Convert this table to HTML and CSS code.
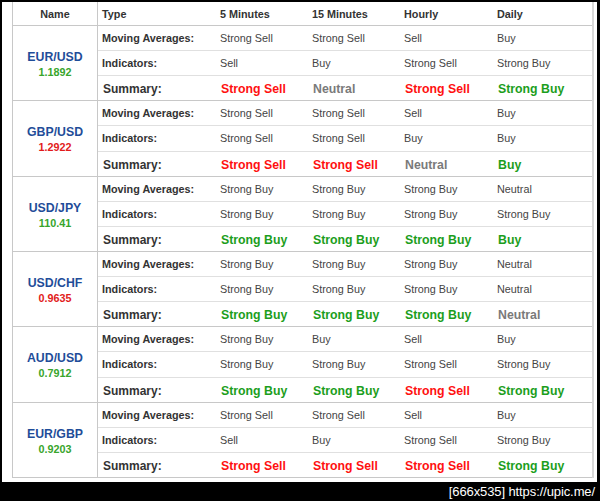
FILE: index.html
```html
<!DOCTYPE html>
<html>
<head>
<meta charset="utf-8">
<link rel="stylesheet" href="styles.css">
</head>
<body>
<div class="frame">
  <div class="grid">
    <div class="h name-h">Name</div>
    <div class="h">Type</div>
    <div class="h">5 Minutes</div>
    <div class="h">15 Minutes</div>
    <div class="h">Hourly</div>
    <div class="h">Daily</div>

    <div class="pair"><span class="sym">EUR/USD</span><span class="price up">1.1892</span></div>
    <div class="lbl">Moving Averages:</div><div class="v">Strong Sell</div><div class="v">Strong Sell</div><div class="v">Sell</div><div class="v">Buy</div>
    <div class="lbl">Indicators:</div><div class="v">Sell</div><div class="v">Buy</div><div class="v">Strong Sell</div><div class="v">Strong Buy</div>
    <div class="lbl sum">Summary:</div><div class="s sell">Strong Sell</div><div class="s neu">Neutral</div><div class="s sell">Strong Sell</div><div class="s buy">Strong Buy</div>

    <div class="pair"><span class="sym">GBP/USD</span><span class="price down">1.2922</span></div>
    <div class="lbl">Moving Averages:</div><div class="v">Strong Sell</div><div class="v">Strong Sell</div><div class="v">Sell</div><div class="v">Buy</div>
    <div class="lbl">Indicators:</div><div class="v">Strong Sell</div><div class="v">Strong Sell</div><div class="v">Buy</div><div class="v">Buy</div>
    <div class="lbl sum">Summary:</div><div class="s sell">Strong Sell</div><div class="s sell">Strong Sell</div><div class="s neu">Neutral</div><div class="s buy">Buy</div>

    <div class="pair"><span class="sym">USD/JPY</span><span class="price up">110.41</span></div>
    <div class="lbl">Moving Averages:</div><div class="v">Strong Buy</div><div class="v">Strong Buy</div><div class="v">Strong Buy</div><div class="v">Neutral</div>
    <div class="lbl">Indicators:</div><div class="v">Strong Buy</div><div class="v">Strong Buy</div><div class="v">Strong Buy</div><div class="v">Strong Buy</div>
    <div class="lbl sum">Summary:</div><div class="s buy">Strong Buy</div><div class="s buy">Strong Buy</div><div class="s buy">Strong Buy</div><div class="s buy">Buy</div>

    <div class="pair"><span class="sym">USD/CHF</span><span class="price down">0.9635</span></div>
    <div class="lbl">Moving Averages:</div><div class="v">Strong Buy</div><div class="v">Strong Buy</div><div class="v">Strong Buy</div><div class="v">Neutral</div>
    <div class="lbl">Indicators:</div><div class="v">Strong Buy</div><div class="v">Strong Buy</div><div class="v">Strong Buy</div><div class="v">Neutral</div>
    <div class="lbl sum">Summary:</div><div class="s buy">Strong Buy</div><div class="s buy">Strong Buy</div><div class="s buy">Strong Buy</div><div class="s neu">Neutral</div>

    <div class="pair"><span class="sym">AUD/USD</span><span class="price up">0.7912</span></div>
    <div class="lbl">Moving Averages:</div><div class="v">Strong Buy</div><div class="v">Buy</div><div class="v">Sell</div><div class="v">Buy</div>
    <div class="lbl">Indicators:</div><div class="v">Strong Buy</div><div class="v">Strong Buy</div><div class="v">Strong Sell</div><div class="v">Strong Buy</div>
    <div class="lbl sum">Summary:</div><div class="s buy">Strong Buy</div><div class="s buy">Strong Buy</div><div class="s sell">Strong Sell</div><div class="s buy">Strong Buy</div>

    <div class="pair"><span class="sym">EUR/GBP</span><span class="price up">0.9203</span></div>
    <div class="lbl">Moving Averages:</div><div class="v">Strong Sell</div><div class="v">Strong Sell</div><div class="v">Sell</div><div class="v">Buy</div>
    <div class="lbl">Indicators:</div><div class="v">Sell</div><div class="v">Buy</div><div class="v">Strong Sell</div><div class="v">Strong Buy</div>
    <div class="lbl sum">Summary:</div><div class="s sell">Strong Sell</div><div class="s sell">Strong Sell</div><div class="s sell">Strong Sell</div><div class="s buy">Strong Buy</div>
  </div>
</div>
<div class="mark">[666x535] https://upic.me/</div>
</body>
</html>
```

FILE: styles.css
```css
html, body {
  margin: 0;
  padding: 0;
  background: #000;
}
body {
  font-family: "Liberation Sans", Arial, sans-serif;
  color: #333;
}
.frame {
  background: #fff;
  width: 585px;
  height: 480px;
  margin: 2px 3px 0 2px;
  padding-left: 10px;
  overflow: hidden;
}
.grid {
  display: grid;
  grid-template-columns: 85px 118px 92px 92px 93px 99px;
  grid-template-rows: 24px repeat(18, 25.11px);
  border-left: 1px solid #c8c8c8;
  border-right: 2px solid #d8d8d8;
  width: 579px;
}
.grid > div {
  display: flex;
  align-items: center;
  padding-left: 4px;
  border-bottom: 1px solid #e0e0e0;
  white-space: nowrap;
  box-sizing: border-box;
}
.h {
  font-size: 10.8px;
  font-weight: bold;
  color: #333;
  border-bottom: 1px solid #c8c8c8 !important;
}
.grid > .name-h {
  justify-content: center;
  padding-left: 0;
  border-right: 1px solid #c8c8c8;
}
.grid > .pair {
  grid-row: span 3;
  flex-direction: column;
  justify-content: center;
  padding: 3px 0 0 0;
  border-right: 1px solid #c8c8c8;
  border-bottom: 1px solid #c8c8c8;
}
.sym {
  font-size: 12.3px;
  font-weight: bold;
  color: #1f4d99;
  line-height: 15px;
}
.price {
  font-size: 10.8px;
  font-weight: bold;
  line-height: 14px;
}
.price.up { color: #38a52c; }
.price.down { color: #e21b1b; }
.lbl {
  font-size: 10.8px;
  font-weight: bold;
  color: #333;
}
.grid > .lbl.sum {
  font-size: 12px;
  padding-left: 5px;
  padding-top: 2px;
}
.v {
  font-size: 10.8px;
  color: #444;
}
.grid > .s {
  font-size: 12.3px;
  font-weight: bold;
  padding-left: 5px;
  padding-top: 2px;
}
.grid > .sum,
.grid > .s {
  border-bottom: 1px solid #c8c8c8;
}
.sell { color: #ff1010; }
.buy { color: #1c9e1c; }
.neu { color: #7a7a7a; }
.mark {
  color: #fff;
  font-family: "Liberation Sans", sans-serif;
  font-size: 13px;
  text-align: right;
  padding-right: 5px;
  line-height: 19px;
  letter-spacing: -0.1px;
}
```
